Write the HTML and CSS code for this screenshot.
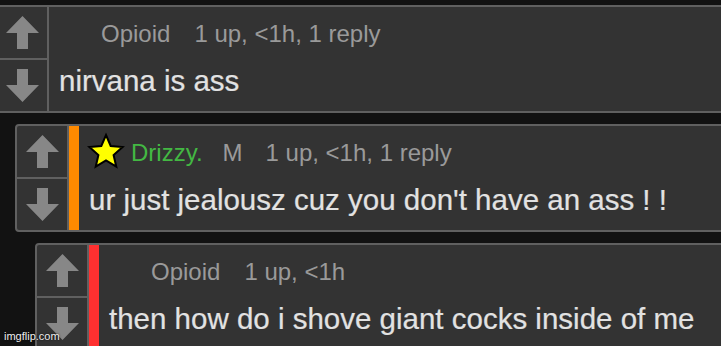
FILE: index.html
```html
<!DOCTYPE html>
<html lang="en">
<head>
    <meta charset="UTF-8">
    <meta name="viewport" content="width=device-width, initial-scale=1.0">
    <title>Comments</title>
    <link rel="stylesheet" href="styles.css">
</head>
<body>
    <div class="thread">
        <div class="comment level-0">
            <div class="votes">
                <div class="vote">
                    <svg class="arrow" viewBox="0 0 33 33"><polygon points="16.5,0 33,17 22,17 22,33 11,33 11,17 0,17"/></svg>
                </div>
                <div class="vote">
                    <svg class="arrow" viewBox="0 0 33 33"><polygon points="16.5,33 33,16 22,16 22,0 11,0 11,16 0,16"/></svg>
                </div>
            </div>
            <div class="content">
                <div class="head">
                    <span class="badge"></span>
                    <span class="name">Opioid</span>
                    <span class="meta">1 up, &lt;1h, 1 reply</span>
                </div>
                <div class="text">nirvana is ass</div>
            </div>
        </div>

        <div class="comment level-1">
            <div class="votes">
                <div class="vote">
                    <svg class="arrow" viewBox="0 0 33 33"><polygon points="16.5,0 33,17 22,17 22,33 11,33 11,17 0,17"/></svg>
                </div>
                <div class="vote">
                    <svg class="arrow" viewBox="0 0 33 33"><polygon points="16.5,33 33,16 22,16 22,0 11,0 11,16 0,16"/></svg>
                </div>
            </div>
            <div class="bar orange"></div>
            <div class="content">
                <div class="head">
                    <span class="badge">
                        <svg class="star" viewBox="0 0 34 34"><polygon points="17,1 21.7,12 33.6,13.1 24.6,21 27.3,32.7 17,26.5 6.7,32.7 9.4,21 0.4,13.1 12.3,12"/></svg>
                    </span>
                    <span class="name green">Drizzy.</span>
                    <span class="tag">M</span>
                    <span class="meta">1 up, &lt;1h, 1 reply</span>
                </div>
                <div class="text">ur just jealousz cuz you don't have an ass ! !</div>
            </div>
        </div>

        <div class="comment level-2">
            <div class="votes">
                <div class="vote">
                    <svg class="arrow" viewBox="0 0 33 33"><polygon points="16.5,0 33,17 22,17 22,33 11,33 11,17 0,17"/></svg>
                </div>
                <div class="vote">
                    <svg class="arrow" viewBox="0 0 33 33"><polygon points="16.5,33 33,16 22,16 22,0 11,0 11,16 0,16"/></svg>
                </div>
            </div>
            <div class="bar red"></div>
            <div class="content">
                <div class="head">
                    <span class="badge"></span>
                    <span class="name">Opioid</span>
                    <span class="meta">1 up, &lt;1h</span>
                </div>
                <div class="text">then how do i shove giant cocks inside of me</div>
            </div>
        </div>
    </div>

    <div class="watermark">imgflip.com</div>
</body>
</html>
```

FILE: styles.css
```css
body {
    font-family: "Liberation Sans", Arial, sans-serif;
    background-color: #121212;
    margin: 0;
    padding: 0;
    height: 346px;
    overflow: hidden;
    position: relative;
}

.thread {
    display: flex;
    flex-direction: column;
    gap: 11px;
    padding-top: 5px;
}

.comment {
    display: flex;
    height: 108px;
    box-sizing: border-box;
    background-color: #333;
    border: 2px solid #606060;
    border-radius: 4px;
    margin-right: -20px;
}

.level-0 {
    margin-left: -5px;
}

.level-1 {
    margin-left: 15px;
}

.level-2 {
    margin-left: 35px;
}

.votes {
    width: 50px;
    flex-shrink: 0;
    display: flex;
    flex-direction: column;
    border-right: 2px solid #606060;
}

.vote {
    flex: 1;
    display: flex;
    justify-content: center;
    align-items: center;
}

.vote + .vote {
    border-top: 2px solid #606060;
}

.arrow {
    width: 33px;
    height: 33px;
    fill: #878787;
}

.bar {
    width: 10px;
    flex-shrink: 0;
}

.orange {
    background-color: #ff8a00;
}

.red {
    background-color: #ff3030;
}

.content {
    padding: 10px 0 0 10px;
    white-space: nowrap;
}

.head {
    display: flex;
    align-items: center;
    height: 34px;
    font-size: 24px;
    line-height: 28px;
    color: #9a9a9a;
}

.badge {
    width: 34px;
    height: 34px;
    margin-right: 8px;
    flex-shrink: 0;
}

.star {
    width: 34px;
    height: 34px;
    margin-top: -2px;
    overflow: visible;
    fill: #ffff00;
    stroke: #000;
    stroke-width: 2;
    stroke-linejoin: miter;
}

.name {
    margin-right: 24px;
}

.green {
    color: #43b843;
    margin-right: 20px;
}

.tag {
    margin-right: 23px;
}

.text {
    margin-top: 13px;
    font-size: 29.5px;
    line-height: 34px;
    color: #e2e2e2;
    -webkit-text-stroke: 0.2px #e2e2e2;
}

.watermark {
    position: absolute;
    left: 4px;
    bottom: 4px;
    font-size: 11px;
    color: #eee;
    text-shadow: 0 0 2px #000;
}
```
